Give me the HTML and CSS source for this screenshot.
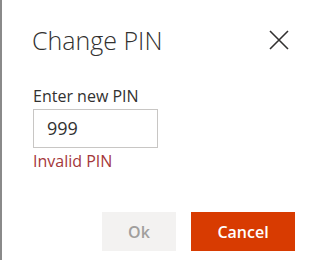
FILE: index.html
```html
<!DOCTYPE html>
<html>
<head>
<meta charset="utf-8">
<link rel="stylesheet" href="styles.css">
</head>
<body>
<div class="dialog">
  <div class="header">
    <h1 class="title">Change PIN</h1>
    <button class="close" aria-label="Close">
      <svg width="20" height="20" viewBox="0 0 20 20"><path d="M1 1 L19 19 M19 1 L1 19" stroke="#323130" stroke-width="1.6" fill="none"/></svg>
    </button>
  </div>
  <div class="content">
    <label class="label">Enter new PIN</label>
    <div class="field">999</div>
    <div class="error">Invalid PIN</div>
  </div>
  <div class="footer">
    <button class="btn btn-ok">Ok</button>
    <button class="btn btn-cancel">Cancel</button>
  </div>
</div>
</body>
</html>
```
FILE: styles.css
```css
html, body { margin: 0; padding: 0; background: #fff; }
body { font-family: "Open Sans", "Noto Sans", sans-serif; color: #323130; }
.dialog {
  box-sizing: border-box;
  height: 260px;
  width: 320px;
  border-left: 2px solid #8a8a8a;
  padding: 20px 25px 0 30px;
  display: flex;
  flex-direction: column;
}
.header {
  display: flex;
  justify-content: space-between;
  align-items: center;
  height: 40px;
}
.title {
  margin: 0;
  font-size: 25px;
  font-weight: 300;
  line-height: 40px;
  color: #323130;
}
.close {
  border: 0;
  background: none;
  padding: 0;
  margin-right: 6px;
  width: 20px;
  height: 20px;
  display: flex;
}
.content {
  display: flex;
  flex-direction: column;
  align-items: flex-start;
  padding-left: 1px;
  margin-top: 25px;
}
.label {
  font-size: 16px;
  line-height: 22px;
  color: #323130;
}
.field {
  box-sizing: border-box;
  margin-top: 2px;
  width: 125px;
  height: 39px;
  border: 1px solid #c8c6c4;
  padding-left: 13px;
  font-size: 18px;
  line-height: 37px;
  color: #323130;
}
.error {
  font-size: 16px;
  line-height: 22px;
  color: #a4373a;
  margin-top: 2px;
}
.footer {
  margin-top: auto;
  margin-bottom: 9px;
  display: flex;
  justify-content: flex-end;
  gap: 15px;
}
.btn {
  height: 39px;
  border: 0;
  font-family: inherit;
  font-size: 16px;
  font-weight: 600;
  padding: 0;
}
.btn-ok { width: 74px; background: #f3f2f1; color: #a19f9d; }
.btn-cancel { width: 104px; background: #d83b01; color: #fff; }
```
